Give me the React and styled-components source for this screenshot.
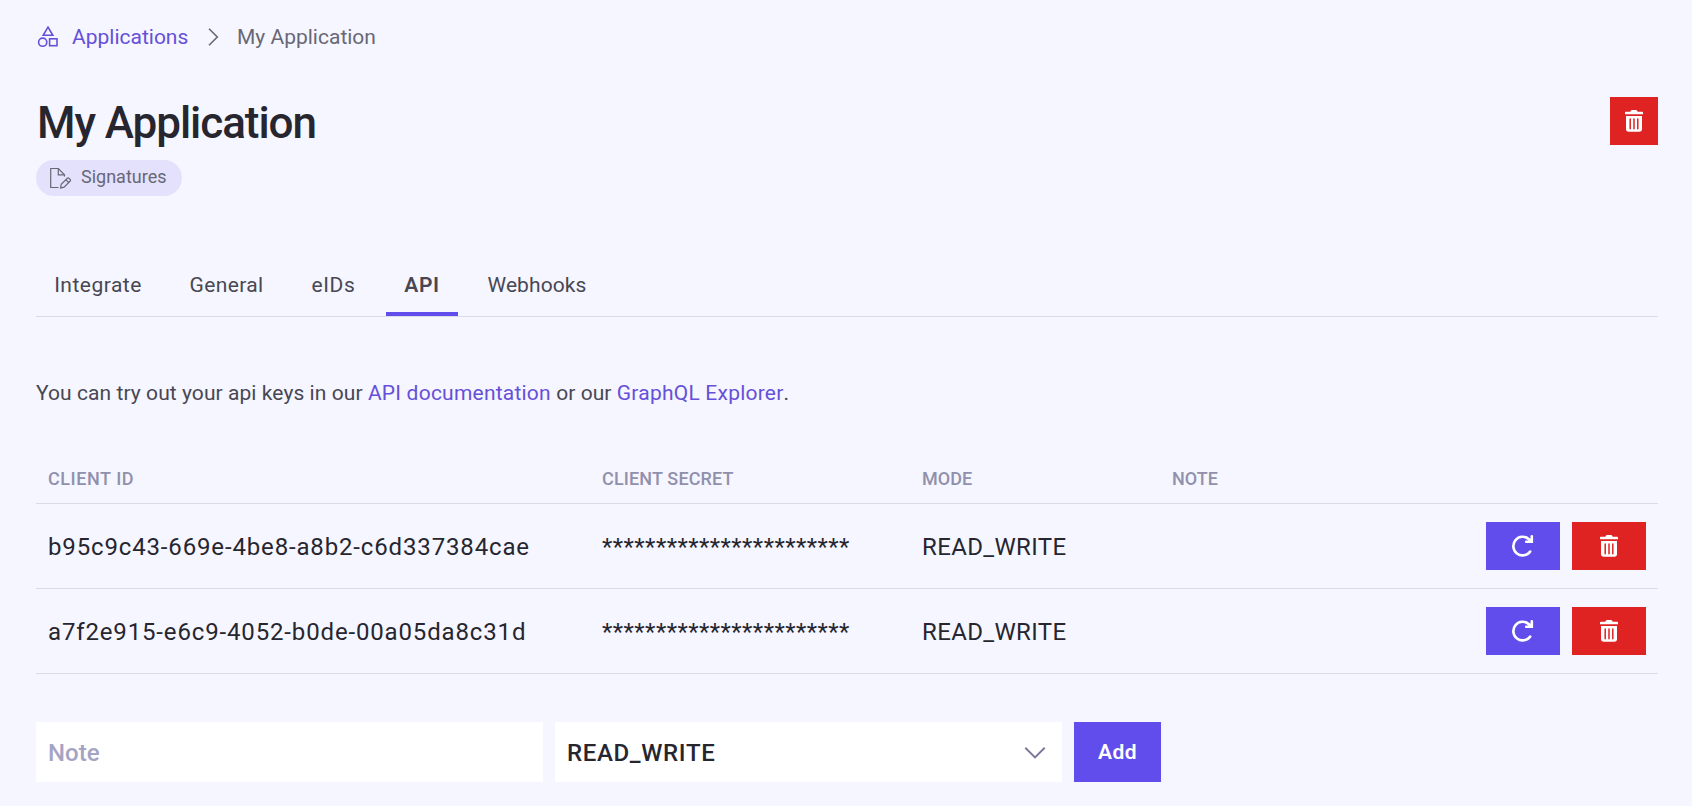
import styled, { createGlobalStyle } from "styled-components";

const colors = {
    background: "#f5f6ff",
    primary: "#604dec",
    link: "#6650d8",
    danger: "#df2222",
    border: "#dadbe9",
    dark: "#27262f",
    text: "#484752",
    muted: "#696776",
    header: "#9190ac",
    placeholder: "#a5a3c4",
    badge: "#e4e1fd",
};

const GlobalStyle = createGlobalStyle`
    * {
        box-sizing: border-box;
    }

    body {
        margin: 0;
        background-color: ${colors.background};
        color: ${colors.text};
        font-family: Roboto, "Liberation Sans", sans-serif;
        font-size: 21px;
    }
`;

const Page = styled.main`
    width: 1692px;
    height: 806px;
    padding: 21px 34px 0 36px;
    overflow: hidden;
`;

const Breadcrumb = styled.nav`
    display: flex;
    align-items: center;
    height: 32px;
    color: ${colors.muted};

    svg {
        flex-shrink: 0;
    }
`;

const Crumb = styled.a`
    display: flex;
    align-items: center;
    gap: 13px;
    width: 167px;
    padding-left: 1px;
    color: ${colors.link};
    text-decoration: none;
`;

const CurrentCrumb = styled.span`
    margin-left: 14px;
`;

const Header = styled.header`
    display: flex;
    justify-content: space-between;
    align-items: flex-start;
    margin-top: 44px;
`;

const Title = styled.h1`
    margin: -2px 0 0 1px;
    font-size: 44px;
    font-weight: 500;
    line-height: 56px;
    letter-spacing: -1.05px;
    color: ${colors.dark};
`;

const Badge = styled.span`
    display: flex;
    align-items: center;
    gap: 9px;
    width: 146px;
    height: 36px;
    margin-top: 9px;
    padding-left: 13px;
    border-radius: 18px;
    background-color: ${colors.badge};
    color: ${colors.muted};
    font-size: 18px;
    line-height: 22px;
`;

const BadgeLabel = styled.span`
    padding-bottom: 2px;
`;

const Button = styled.button`
    display: flex;
    align-items: center;
    justify-content: center;
    width: ${(props) => props.$width}px;
    height: ${(props) => props.$height || 48}px;
    padding: 0;
    border: none;
    background-color: ${(props) => (props.$danger ? colors.danger : colors.primary)};
    color: white;
    font: inherit;
    font-weight: 600;
    letter-spacing: 0.4px;
`;

const Tabs = styled.nav`
    display: flex;
    gap: 12px;
    height: 62px;
    margin-top: 59px;
    border-bottom: 1px solid ${colors.border};
`;

const Tab = styled.a`
    width: ${(props) => props.$width}px;
    height: 61px;
    padding-top: 17px;
    border-bottom: 4px solid ${(props) => (props.$active ? colors.primary : "transparent")};
    font-weight: ${(props) => (props.$active ? 600 : 400)};
    line-height: 26px;
    text-align: center;
    letter-spacing: ${(props) => props.$spacing || 0};
`;

const Intro = styled.p`
    margin: 60px 0 0;
    line-height: 32px;
    letter-spacing: 0.07px;
    white-space: nowrap;
`;

const IntroLink = styled.a`
    color: ${colors.link};
    text-decoration: none;
    letter-spacing: 0.22px;
`;

const Row = styled.div`
    display: grid;
    grid-template-columns: 554px 320px 250px 1fr auto;
    align-items: center;
    height: 85px;
    padding: 0 12px;
    border-bottom: 1px solid ${colors.border};
    color: ${colors.dark};
    font-size: 24px;
`;

const HeadRow = styled(Row)`
    height: 51px;
    margin-top: 44px;
    color: ${colors.header};
    font-size: 18px;
    font-weight: 500;
`;

const HeadCell = styled.span`
    letter-spacing: ${(props) => props.$spacing || 0};
`;

const Cell = styled(HeadCell)`
    padding-top: 2px;
`;

const Actions = styled.div`
    display: flex;
    gap: 12px;
`;

const Form = styled.form`
    display: flex;
    gap: 12px;
    margin-top: 48px;
`;

const Input = styled.input`
    width: 507px;
    height: 60px;
    padding: 2px 12px 0;
    border: none;
    background-color: white;
    font: inherit;
    font-size: 24px;
    font-weight: 500;

    &::placeholder {
        color: ${colors.placeholder};
        opacity: 1;
    }
`;

const Select = styled.div`
    display: flex;
    align-items: center;
    justify-content: space-between;
    width: 507px;
    height: 60px;
    padding: 2px 16px 0 12px;
    background-color: white;
    color: ${colors.dark};
    font-size: 24px;
    font-weight: 500;
    letter-spacing: 0.65px;
`;

const ShapesIcon = () => (
    <svg width="22" height="22" viewBox="0 0 22 22" fill="none" stroke="currentColor" strokeWidth="1.6">
        <path d="M11 1.2 15.8 9.3H6.2Z" />
        <circle cx="5.7" cy="16.2" r="4.1" />
        <rect x="12.6" y="12.8" width="7.4" height="6.9" />
    </svg>
);

const ChevronRight = () => (
    <svg width="20" height="20" viewBox="0 0 20 20" fill="none" stroke="currentColor" strokeWidth="1.6">
        <path d="M6 1.8 14.3 10 6 18.2" />
    </svg>
);

const ChevronDown = () => (
    <svg width="22" height="14" viewBox="0 0 22 14" fill="none" stroke="#79769a" strokeWidth="1.9">
        <path d="M1.3 1.8 11 11.4 20.7 1.8" />
    </svg>
);

const SignatureIcon = () => (
    <svg width="23" height="23" viewBox="0 0 23 23" fill="none" stroke="currentColor" strokeWidth="1.2">
        <path d="M9.5 20.5H1.7V1.5H9.3L15.5 7.8V9.5" />
        <path d="M9.3 1.5V7.8H15.5" />
        <path d="M11.6 20.9 12.2 17.2 18.4 11.2Q19.2 10.5 20 11.3L21.2 12.5Q21.9 13.2 21.2 14L15.1 20.2Z" />
        <path d="M16.9 12.7 19.7 15.5" />
    </svg>
);

const TrashIcon = () => (
    <svg width="20" height="24" viewBox="0 0 20 24" fill="none">
        <path
            d="M6.3 2.8 7 1.6Q7.3 1 8 1H12Q12.7 1 13 1.6L13.7 2.8H18.2Q19 2.8 19 3.6V5.2H1V3.6Q1 2.8 1.8 2.8Z"
            fill="white"
        />
        <path d="M2 7H18V20Q18 22.8 15.2 22.8H4.8Q2 22.8 2 20Z" fill="white" />
        <path d="M6.2 10V19.7M10 10V19.7M13.8 10V19.7" stroke={colors.danger} strokeWidth="1.5" strokeLinecap="round" />
    </svg>
);

const RefreshIcon = () => (
    <svg width="24" height="24" viewBox="0 0 24 24" fill="none" stroke="white" strokeWidth="2.6" strokeLinecap="round">
        <path d="M19.2 17.5A9.3 9.3 0 1 1 17.9 5.2L20 7.2" />
        <path d="M20.8 2.3V7.8H15.2" />
        <path d="M20.8 3.5V7.8H16.5Z" fill="white" stroke="none" />
    </svg>
);

const apiKeys = [
    { id: "b95c9c43-669e-4be8-a8b2-c6d337384cae", mode: "READ_WRITE" },
    { id: "a7f2e915-e6c9-4052-b0de-00a05da8c31d", mode: "READ_WRITE" },
];

const tabs = [
    { label: "Integrate", width: 124, spacing: "0.5px" },
    { label: "General", width: 109, spacing: "0.35px" },
    { label: "eIDs", width: 81, spacing: "0.6px" },
    { label: "API", width: 72, spacing: "0.6px", active: true },
    { label: "Webhooks", width: 134, spacing: "0.1px" },
];

function App() {
    return (
        <Page>
            <GlobalStyle />
            <Breadcrumb>
                <Crumb>
                    <ShapesIcon />
                    Applications
                </Crumb>
                <ChevronRight />
                <CurrentCrumb>My Application</CurrentCrumb>
            </Breadcrumb>
            <Header>
                <div>
                    <Title>My Application</Title>
                    <Badge>
                        <SignatureIcon />
                        <BadgeLabel>Signatures</BadgeLabel>
                    </Badge>
                </div>
                <Button $danger $width={48} aria-label="Delete application">
                    <TrashIcon />
                </Button>
            </Header>
            <Tabs>
                {tabs.map((tab) => (
                    <Tab key={tab.label} $width={tab.width} $spacing={tab.spacing} $active={tab.active}>
                        {tab.label}
                    </Tab>
                ))}
            </Tabs>
            <Intro>
                You can try out your api keys in our <IntroLink>API documentation</IntroLink> or our{" "}
                <IntroLink>GraphQL Explorer</IntroLink>.
            </Intro>
            <HeadRow>
                <HeadCell $spacing="0.55px">CLIENT ID</HeadCell>
                <HeadCell $spacing="0.15px">CLIENT SECRET</HeadCell>
                <HeadCell>MODE</HeadCell>
                <HeadCell>NOTE</HeadCell>
            </HeadRow>
            {apiKeys.map((key) => (
                <Row key={key.id}>
                    <Cell $spacing="0.85px">{key.id}</Cell>
                    <Cell $spacing="0.44px">{"*".repeat(23)}</Cell>
                    <Cell $spacing="0.35px">{key.mode}</Cell>
                    <Cell />
                    <Actions>
                        <Button $width={74} aria-label="Refresh secret">
                            <RefreshIcon />
                        </Button>
                        <Button $danger $width={74} aria-label="Delete key">
                            <TrashIcon />
                        </Button>
                    </Actions>
                </Row>
            ))}
            <Form>
                <Input placeholder="Note" />
                <Select>
                    READ_WRITE
                    <ChevronDown />
                </Select>
                <Button type="button" $width={87} $height={60}>
                    Add
                </Button>
            </Form>
        </Page>
    );
}

export default App;
